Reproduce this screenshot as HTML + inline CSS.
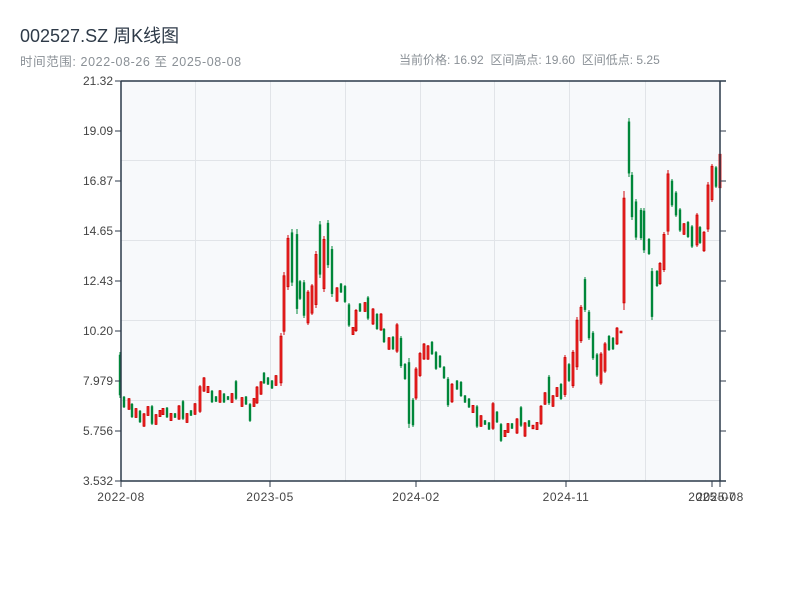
<!DOCTYPE html>
<html><head><meta charset="utf-8"><style>
body{margin:0;width:800px;height:600px;background:#fff;overflow:hidden;font-family:"Liberation Sans","Noto Sans CJK SC",sans-serif;}
.t{position:absolute;left:20px;top:22px;font-size:18px;color:#2e3a48;}
.s{position:absolute;top:51px;font-size:12.5px;color:#8a9096;}
</style></head><body>
<div class="t">002527.SZ 周K线图</div>
<div class="s" style="left:20px;letter-spacing:0.6px">时间范围: 2022-08-26 至 2025-08-08</div>
<div class="s" style="left:399px;font-size:12px">当前价格: 16.92 &nbsp;区间高点: 19.60 &nbsp;区间低点: 5.25</div>
<svg id="c" width="800" height="600" style="position:absolute;left:0;top:0" font-family="Liberation Sans, sans-serif" font-size="12" fill="#444">
<rect x="121" y="81" width="599" height="400" fill="#f7f9fb"/>
<g stroke="#e1e4e8" stroke-width="1">
<line x1="195.5" y1="81" x2="195.5" y2="481"/><line x1="270.5" y1="81" x2="270.5" y2="481"/><line x1="345.5" y1="81" x2="345.5" y2="481"/><line x1="420.5" y1="81" x2="420.5" y2="481"/><line x1="494.5" y1="81" x2="494.5" y2="481"/><line x1="569.5" y1="81" x2="569.5" y2="481"/><line x1="645.5" y1="81" x2="645.5" y2="481"/>
<line x1="121" y1="160.5" x2="720" y2="160.5"/><line x1="121" y1="240.5" x2="720" y2="240.5"/><line x1="121" y1="320.5" x2="720" y2="320.5"/><line x1="121" y1="400.5" x2="720" y2="400.5"/>
</g>
<g id="k"></g>
<g stroke="#2c3a4a" stroke-width="1.5" fill="none">
<line x1="121" y1="81" x2="121" y2="481"/><line x1="720" y1="81" x2="720" y2="481"/>
<line x1="121" y1="81" x2="726" y2="81"/><line x1="121" y1="481" x2="726" y2="481"/>
</g>
<g stroke="#2c3a4a" stroke-width="1" id="ticks"></g>
<g text-anchor="end" id="yl"></g>
<g text-anchor="middle" letter-spacing="0.5">
<text x="121" y="501">2022-08</text><text x="270" y="501">2023-05</text><text x="416" y="501">2024-02</text><text x="566" y="501">2024-11</text><text x="712" y="501">2025-07</text><text x="720" y="501">2025-08</text>
</g>
</svg>
<script>
var ns="http://www.w3.org/2000/svg";
function el(p,t,a){var e=document.createElementNS(ns,t);for(var k in a)e.setAttribute(k,a[k]);p.appendChild(e);return e;}
var yl=document.getElementById('yl'),tk=document.getElementById('ticks');
var labs=["21.32","19.09","16.87","14.65","12.43","10.20","7.979","5.756","3.532"];
for(var i=0;i<9;i++){var y=81+i*50;var t=el(yl,'text',{x:113,y:y+4});t.textContent=labs[i];
el(tk,'line',{x1:115,y1:y,x2:121,y2:y});el(tk,'line',{x1:720,y1:y,x2:726,y2:y});}
[121,270,416,566,712,720].forEach(function(x){el(tk,'line',{x1:x,y1:481,x2:x,y2:487});});
var d=[[120,352,398,'g'],[124,396,408,'g'],[129,398,410,'r'],[132,403,418,'g'],[136,408,418,'r'],[140,410,423,'g'],[144,413,427,'r'],[148,406,416,'r'],[152,405,425,'g'],[156,414,425,'r'],[160,410,417,'r'],[163,408,415,'r'],[167,407,418,'g'],[171,413,421,'r'],[175,413,418,'g'],[179,405,420,'r'],[183,400,420,'g'],[187,413,423,'r'],[191,410,416,'g'],[195,403,415,'r'],[200,385,413,'r'],[204,377,392,'r'],[208,386,393,'r'],[212,390,403,'g'],[216,396,402,'g'],[220,390,403,'r'],[224,393,403,'g'],[228,396,400,'g'],[232,393,403,'r'],[236,380,400,'g'],[242,397,407,'r'],[246,396,405,'g'],[250,403,422,'g'],[254,398,407,'r'],[257,386,404,'r'],[261,381,395,'r'],[264,372,384,'g'],[268,377,385,'g'],[272,380,389,'g'],[276,375,386,'r'],[281,333,386,'r'],[284,272,335,'r'],[288,235,290,'r'],[292,229,286,'g'],[297,229,314,'g'],[300,280,300,'g'],[304,280,318,'g'],[308,290,325,'r'],[312,284,315,'r'],[316,251,308,'r'],[320,221,278,'g'],[324,236,292,'r'],[328,220,268,'g'],[332,246,297,'g'],[337,287,302,'r'],[341,283,293,'g'],[345,285,303,'g'],[349,303,327,'g'],[353,327,335,'r'],[356,309,332,'r'],[360,303,312,'g'],[365,302,312,'r'],[368,296,320,'g'],[373,308,325,'r'],[377,313,330,'g'],[381,313,331,'r'],[384,328,343,'g'],[389,337,350,'r'],[393,336,350,'g'],[397,323,353,'r'],[401,336,368,'g'],[405,363,380,'g'],[409,358,428,'g'],[413,398,427,'g'],[416,367,400,'r'],[420,352,377,'r'],[424,343,360,'r'],[428,345,360,'r'],[432,341,355,'g'],[436,351,370,'g'],[440,355,368,'g'],[444,366,379,'g'],[448,377,407,'g'],[452,383,403,'r'],[457,380,390,'g'],[461,381,397,'g'],[465,395,403,'g'],[469,398,408,'g'],[473,405,413,'r'],[477,405,428,'g'],[481,415,427,'r'],[485,420,425,'g'],[489,422,430,'g'],[493,402,430,'r'],[497,411,423,'g'],[501,423,442,'g'],[505,430,437,'r'],[508,423,433,'r'],[512,423,429,'g'],[517,418,434,'r'],[521,406,427,'g'],[525,422,437,'r'],[529,420,427,'g'],[533,425,429,'r'],[537,422,430,'r'],[541,405,425,'r'],[545,392,405,'r'],[549,375,405,'g'],[553,395,407,'r'],[557,387,397,'r'],[561,383,400,'g'],[565,355,397,'r'],[569,363,382,'g'],[573,350,388,'r'],[577,317,370,'r'],[581,305,343,'r'],[585,277,312,'g'],[589,310,340,'g'],[593,331,360,'g'],[597,353,377,'g'],[601,352,385,'r'],[605,342,373,'r'],[609,335,351,'g'],[613,337,350,'g'],[617,327,345,'r'],[621,331,333,'r'],[624,191,310,'r'],[629,118,177,'g'],[632,172,220,'g'],[636,199,240,'g'],[641,208,240,'g'],[644,208,253,'g'],[649,238,255,'g'],[652,268,320,'g'],[657,270,287,'g'],[660,262,285,'r'],[664,232,272,'r'],[668,170,235,'r'],[672,179,207,'g'],[676,191,217,'g'],[680,208,232,'g'],[684,223,235,'r'],[688,221,238,'g'],[692,225,248,'g'],[697,213,247,'r'],[700,226,244,'g'],[704,231,252,'r'],[708,182,232,'r'],[712,164,202,'r'],[716,166,188,'g'],[720,152,190,'r']];
var k=document.getElementById('k');
d.forEach(function(c){var x=c[0],a=c[1],b=c[2],h=b-a,g=c[3]=='g';
var col=g?'#00873a':'#d10a10';
el(k,'line',{x1:x,y1:a,x2:x,y2:b,stroke:col,'stroke-width':1});
var bt=a+h*0.06,bb=b-h*0.06;if(bb-bt<1.5){bt=a;bb=b+1;}
if(g)el(k,'rect',{x:x-1.2,y:bt,width:2.4,height:bb-bt,fill:col});
else el(k,'rect',{x:x-1,y:bt,width:2,height:bb-bt,fill:'#ee2b2b',stroke:'#cc0000','stroke-width':0.8});});
</script>
</body></html>
